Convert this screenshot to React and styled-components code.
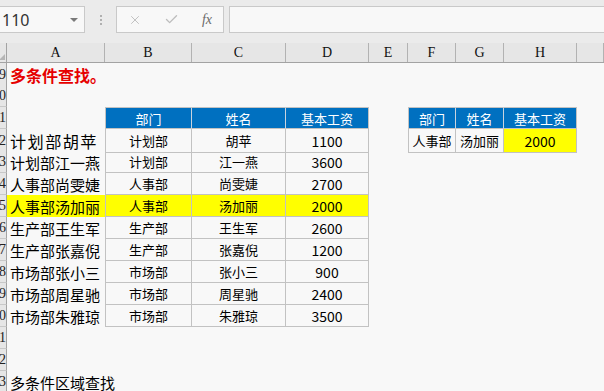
import React from "react";
import styled, { createGlobalStyle } from "styled-components";
import { X, Check } from "lucide-react";

const Global = createGlobalStyle`
  html, body { margin: 0; padding: 0; background: #f8f8f8; overflow: hidden; }
  body { width: 604px; height: 391px; font-family: "Noto Sans CJK SC", "Noto Sans", sans-serif; }
`;

const COLS = "7px 98px 87px 94px 83px 39px 48px 48px 73px 1fr";

const Page = styled.div`
  width: 604px;
  height: 391px;
  overflow: hidden;
  display: flex;
  flex-direction: column;
  background: #f8f8f8;
`;

const Toolbar = styled.div`
  height: 43px;
  flex: none;
  box-sizing: border-box;
  padding-top: 6px;
  display: flex;
  align-items: flex-start;
  background: #ebebeb;
`;

const NameBox = styled.div`
  margin-left: -3px;
  width: 88px;
  height: 27px;
  box-sizing: border-box;
  border: 1px solid #c9c9c9;
  background: #f8f8f8;
  display: flex;
  align-items: center;
  justify-content: space-between;
  padding: 0 6px 0 4px;
  font-family: "Noto Sans", "Liberation Sans", sans-serif;
  font-size: 16px;
  color: #333;
`;

const Caret = styled.span`
  width: 0;
  height: 0;
  border-left: 4px solid transparent;
  border-right: 4px solid transparent;
  border-top: 4px solid #7a7a7a;
`;

const Dots = styled.div`
  width: 31px;
  height: 27px;
  display: flex;
  flex-direction: column;
  align-items: center;
  justify-content: center;
  gap: 2px;
  & > i { width: 2px; height: 2px; background: #b0b0b0; display: block; }
`;

const FxBox = styled.div`
  width: 108px;
  height: 27px;
  box-sizing: border-box;
  border: 1px solid #c9c9c9;
  background: #f8f8f8;
  display: grid;
  grid-template-columns: 36px 36px 1fr;
  align-items: center;
  justify-items: center;
`;

const Fx = styled.span`
  font-family: "Liberation Serif", "DejaVu Serif", serif;
  font-style: italic;
  font-size: 14px;
  color: #6a6a6a;
  padding-left: 2px;
`;

const Formula = styled.div`
  flex: 1;
  margin-left: 5px;
  margin-right: -3px;
  height: 27px;
  box-sizing: border-box;
  border: 1px solid #c9c9c9;
  background: #f8f8f8;
`;

const ColHeader = styled.div`
  display: grid;
  grid-template-columns: ${COLS};
  height: 20px;
  flex: none;
  box-sizing: border-box;
  border-bottom: 1px solid #a3a3a3;
  background: #e6e6e6;
`;

const ColHead = styled.div`
  box-sizing: border-box;
  border-right: 1px solid #b2b2b2;
  display: flex;
  align-items: center;
  justify-content: center;
  font-family: "Liberation Serif", "DejaVu Serif", serif;
  font-size: 14px;
  color: #111;
  padding-top: 1px;
`;

const Corner = styled.div`
  box-sizing: border-box;
  border-right: 1px solid #a3a3a3;
  display: flex;
  align-items: flex-end;
  justify-content: flex-end;
  padding: 0 1px 2px 0;
  &::after {
    content: "";
    width: 0;
    height: 0;
    border-left: 6px solid transparent;
    border-bottom: 6px solid #b5b5b5;
  }
`;

const Row = styled.div`
  display: grid;
  grid-template-columns: ${COLS};
  height: 22px;
  flex: none;
`;

const RowHead = styled.div`
  box-sizing: border-box;
  background: #e6e6e6;
  border-right: 1px solid #a3a3a3;
  border-bottom: 1px solid #c8c8c8;
  overflow: hidden;
  display: flex;
  justify-content: flex-end;
  align-items: center;
  font-family: "Liberation Serif", "DejaVu Serif", serif;
  font-size: 14px;
  color: #222;
  & > span { white-space: nowrap; }
`;

const Cell = styled.div`
  box-sizing: border-box;
  background: ${(p) => p.$bg || "transparent"};
  display: flex;
  align-items: center;
  justify-content: ${(p) => (p.$left ? "flex-start" : "center")};
  padding-left: ${(p) => (p.$left ? "3px" : "0")};
  white-space: nowrap;
  font-size: ${(p) => p.$size || 13}px;
  letter-spacing: ${(p) => p.$track || 0}px;
  font-weight: ${(p) => (p.$bold ? 700 : 400)};
  color: ${(p) => p.$color || "#000"};
  ${(p) =>
    p.$table &&
    `
    border-right: 1px solid ${p.$head ? "#c9d3de" : "#c2c2c2"};
    border-bottom: 1px solid #c2c2c2;
  `}
  ${(p) => p.$first && `border-left: 1px solid #c2c2c2;`}
  ${(p) => p.$top && `border-top: 1px solid #c2c2c2;`}
`;

const BLUE = "#0070c0";
const YELLOW = "#ffff00";

const data = [
  ["计划部胡苹", "计划部", "胡苹", "1100", 16.2, 1.4],
  ["计划部江一燕", "计划部", "江一燕", "3600"],
  ["人事部尚雯婕", "人事部", "尚雯婕", "2700"],
  ["人事部汤加丽", "人事部", "汤加丽", "2000"],
  ["生产部王生军", "生产部", "王生军", "2600"],
  ["生产部张嘉倪", "生产部", "张嘉倪", "1200"],
  ["市场部张小三", "市场部", "张小三", "900"],
  ["市场部周星驰", "市场部", "周星驰", "2400"],
  ["市场部朱雅琼", "市场部", "朱雅琼", "3500"],
];

const Empty = ({ n }) => Array.from({ length: n }, (_, i) => <Cell key={"e" + i} />);

export default function App() {
  const letters = ["A", "B", "C", "D", "E", "F", "G", "H", ""];
  return (
    <Page>
      <Global />
      <Toolbar>
        <NameBox>
          <span>110</span>
          <Caret />
        </NameBox>
        <Dots>
          <i />
          <i />
          <i />
        </Dots>
        <FxBox>
          <X size={14} color="#bdbdbd" strokeWidth={1.6} />
          <Check size={15} color="#bdbdbd" strokeWidth={2.2} />
          <Fx>fx</Fx>
        </FxBox>
        <Formula />
      </Toolbar>
      <ColHeader>
        <Corner />
        {letters.map((l, i) => (
          <ColHead key={i}>{l}</ColHead>
        ))}
      </ColHeader>

      <Row>
        <RowHead><span>19</span></RowHead>
        <Cell $left $size={16} $bold $color="#e60000">多条件查找。</Cell>
        <Empty n={8} />
      </Row>
      <Row>
        <RowHead><span>20</span></RowHead>
        <Empty n={9} />
      </Row>
      <Row>
        <RowHead><span>21</span></RowHead>
        <Cell />
        <Cell $table $head $first $top $bg={BLUE} $color="#fff">部门</Cell>
        <Cell $table $head $top $bg={BLUE} $color="#fff">姓名</Cell>
        <Cell $table $top $bg={BLUE} $color="#fff">基本工资</Cell>
        <Cell />
        <Cell $table $head $first $top $bg={BLUE} $color="#fff">部门</Cell>
        <Cell $table $head $top $bg={BLUE} $color="#fff">姓名</Cell>
        <Cell $table $top $bg={BLUE} $color="#fff">基本工资</Cell>
        <Cell />
      </Row>
      {data.map((d, i) => {
        const hl = i === 3 ? YELLOW : undefined;
        return (
          <Row key={i}>
            <RowHead><span>{22 + i}</span></RowHead>
            <Cell $left $size={d[4] || 15} $track={d[5]} $bg={hl}>{d[0]}</Cell>
            <Cell $table $first $bg={hl}>{d[1]}</Cell>
            <Cell $table $bg={hl}>{d[2]}</Cell>
            <Cell $table $size={14} $bg={hl}>{d[3]}</Cell>
            <Cell />
            {i === 0 ? (
              <>
                <Cell $table $first>人事部</Cell>
                <Cell $table>汤加丽</Cell>
                <Cell $table $size={14} $bg={YELLOW}>2000</Cell>
              </>
            ) : (
              <Empty n={3} />
            )}
            <Cell />
          </Row>
        );
      })}
      <Row>
        <RowHead><span>31</span></RowHead>
        <Empty n={9} />
      </Row>
      <Row>
        <RowHead><span>32</span></RowHead>
        <Empty n={9} />
      </Row>
      <Row>
        <RowHead><span>33</span></RowHead>
        <Cell $left $size={15}>多条件区域查找</Cell>
        <Empty n={8} />
      </Row>
    </Page>
  );
}
